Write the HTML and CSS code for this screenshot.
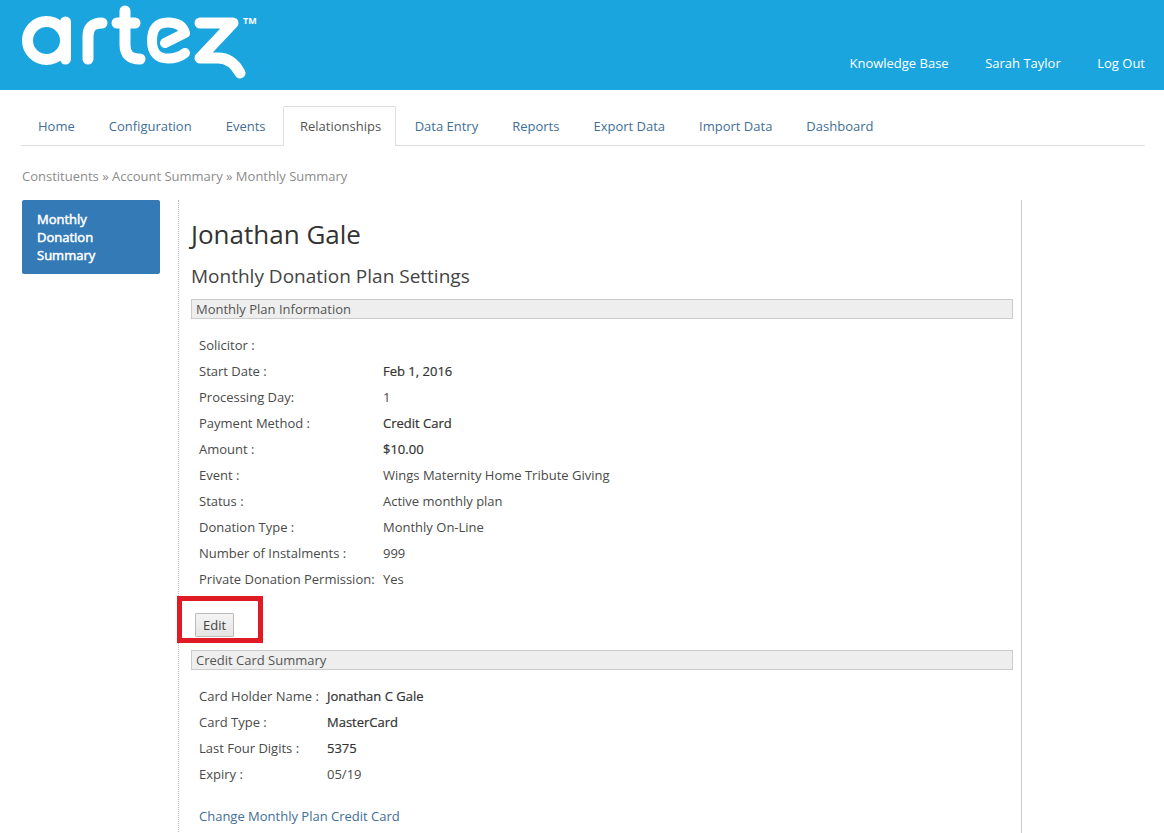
FILE: index.html
```html
<!DOCTYPE html>
<html lang="en">
<head>
    <meta charset="UTF-8">
    <title>Monthly Summary</title>
    <link rel="stylesheet" href="styles.css">
</head>
<body>
    <div class="header">
        <div class="logo">
            <svg width="236" height="80" viewBox="0 0 236 80" fill="none" stroke="#fff" stroke-width="11" stroke-linecap="round" stroke-linejoin="round">
                <circle cx="24.5" cy="37.5" r="19"/>
                <path d="M43.5 19V56"/>
                <path d="M66 56V33Q66 20 80 20"/>
                <path d="M103 8V42Q103 56 118 56"/>
                <path d="M95 20H113"/>
                <path d="M143 40L163 30Q160 19.5 146 19.5Q130 19.5 130 37.5Q130 55.5 146 55.5Q156 55.5 163 50" stroke-width="10"/>
                <path d="M178 20H211L178 55H196Q210 55 218 70"/>
            </svg>
            <span class="tm">TM</span>
        </div>
        <div class="top-links">
            <a href="#">Knowledge Base</a>
            <a href="#">Sarah Taylor</a>
            <a href="#">Log Out</a>
        </div>
    </div>

    <ul class="tabs">
        <li><a href="#">Home</a></li>
        <li><a href="#">Configuration</a></li>
        <li><a href="#">Events</a></li>
        <li class="active"><a href="#">Relationships</a></li>
        <li><a href="#">Data Entry</a></li>
        <li><a href="#">Reports</a></li>
        <li><a href="#">Export Data</a></li>
        <li><a href="#">Import Data</a></li>
        <li><a href="#">Dashboard</a></li>
    </ul>

    <div class="breadcrumb">Constituents » Account Summary » Monthly Summary</div>

    <div class="layout">
        <div class="sidebar">
            <a href="#" class="side-item">Monthly Donation Summary</a>
        </div>
        <div class="main">
            <h1>Jonathan Gale</h1>
            <h2>Monthly Donation Plan Settings</h2>

            <div class="section-title">Monthly Plan Information</div>
            <div class="info info-plan">
                <span>Solicitor :</span><span></span>
                <span>Start Date :</span><b>Feb 1, 2016</b>
                <span>Processing Day:</span><span>1</span>
                <span>Payment Method :</span><b>Credit Card</b>
                <span>Amount :</span><b>$10.00</b>
                <span>Event :</span><span>Wings Maternity Home Tribute Giving</span>
                <span>Status :</span><span>Active monthly plan</span>
                <span>Donation Type :</span><span>Monthly On-Line</span>
                <span>Number of Instalments :</span><span>999</span>
                <span>Private Donation Permission:</span><span>Yes</span>
            </div>

            <div class="edit-row">
                <button class="btn">Edit</button>
                <div class="highlight"></div>
            </div>

            <div class="section-title">Credit Card Summary</div>
            <div class="info info-card">
                <span>Card Holder Name :</span><b>Jonathan C Gale</b>
                <span>Card Type :</span><b>MasterCard</b>
                <span>Last Four Digits :</span><b>5375</b>
                <span>Expiry :</span><span>05/19</span>
            </div>
            <a href="#" class="change-link">Change Monthly Plan Credit Card</a>
        </div>
    </div>
</body>
</html>
```

FILE: styles.css
```css
html, body {
    height: 833px;
    overflow: hidden;
}
body {
    font-family: "Open Sans", Arial, sans-serif;
    font-size: 13px;
    line-height: 18px;
    color: #333;
    background: #fff;
    margin: 0;
}
a {
    text-decoration: none;
}
.header {
    height: 90px;
    background-color: #1aa5df;
    display: flex;
    justify-content: space-between;
    padding: 0 19px 0 22px;
}
.logo {
    position: relative;
    width: 240px;
}
.logo svg {
    display: block;
    margin-top: 3px;
}
.tm {
    position: absolute;
    left: 221px;
    top: 16px;
    color: #fff;
    font-size: 9px;
    line-height: 10px;
    font-weight: 700;
}
.top-links {
    display: flex;
    gap: 36.5px;
    padding-top: 54px;
}
.top-links a {
    color: #fff;
}
.tabs {
    list-style: none;
    display: flex;
    margin: 16px 19px 0 21px;
    padding: 0;
    height: 39px;
    border-bottom: 1px solid #ddd;
}
.tabs a {
    display: block;
    height: 39px;
    padding: 10px 16px 0;
    box-sizing: border-box;
    color: #3f6f96;
    border: 1px solid transparent;
    border-bottom: 0;
}
.tabs .active {
    margin: 0 1.5px 0 0.5px;
}
.tabs .active a {
    height: 40px;
    padding-right: 14px;
    color: #555;
    background: #fff;
    border-color: #ddd;
    border-radius: 2px 2px 0 0;
}
.breadcrumb {
    margin: 21px 0 0 22px;
    color: #8c8c8c;
}
.layout {
    display: flex;
    margin: 15px 0 0 22px;
}
.sidebar {
    width: 138px;
    margin-right: 18px;
}
.side-item {
    display: block;
    background-color: #337ab7;
    color: #fff;
    -webkit-text-stroke: 0.5px #fff;
    border-radius: 2px;
    padding: 10px 14px 10px 15px;
    height: 74px;
    box-sizing: border-box;
}
.main {
    width: 844px;
    height: 640px;
    padding: 0 8px 0 12px;
    box-sizing: border-box;
    border-left: 1px dotted #bbb;
    border-right: 1px solid #ccc;
}
h1 {
    font-size: 26px;
    font-weight: 400;
    line-height: 36px;
    margin: 16px 0 0;
}
h2 {
    font-size: 19px;
    font-weight: 400;
    line-height: 26px;
    margin: 11px 0 0;
    color: #444;
}
.section-title {
    height: 20px;
    line-height: 18px;
    margin-top: 10px;
    padding-left: 4px;
    box-sizing: border-box;
    background: #eee;
    border: 1px solid #ccc;
    color: #555;
}
.info {
    display: grid;
    grid-auto-rows: 26px;
    align-items: center;
    margin: 13px 0 0 8px;
    color: #4a4a4a;
}
.info b {
    font-weight: 400;
    color: #333;
    -webkit-text-stroke: 0.2px #333;
}
.info-plan {
    grid-template-columns: 184px 1fr;
}
.info-card {
    grid-template-columns: 128px 1fr;
}
.edit-row {
    position: relative;
    height: 48px;
    padding: 21px 0 0 4px;
    box-sizing: border-box;
}
.btn {
    display: block;
    width: 39px;
    height: 24px;
    padding: 0;
    font: inherit;
    color: #444;
    background: linear-gradient(#f4f4f4, #e4e4e4);
    border: 1px solid #bbb;
    border-radius: 1px;
}
.highlight {
    position: absolute;
    left: -14px;
    top: 4px;
    width: 86px;
    height: 47px;
    box-sizing: border-box;
    border: 5px solid #e01b24;
}
.change-link {
    display: block;
    margin: 20px 0 0 8px;
    color: #3f6f96;
}
```
